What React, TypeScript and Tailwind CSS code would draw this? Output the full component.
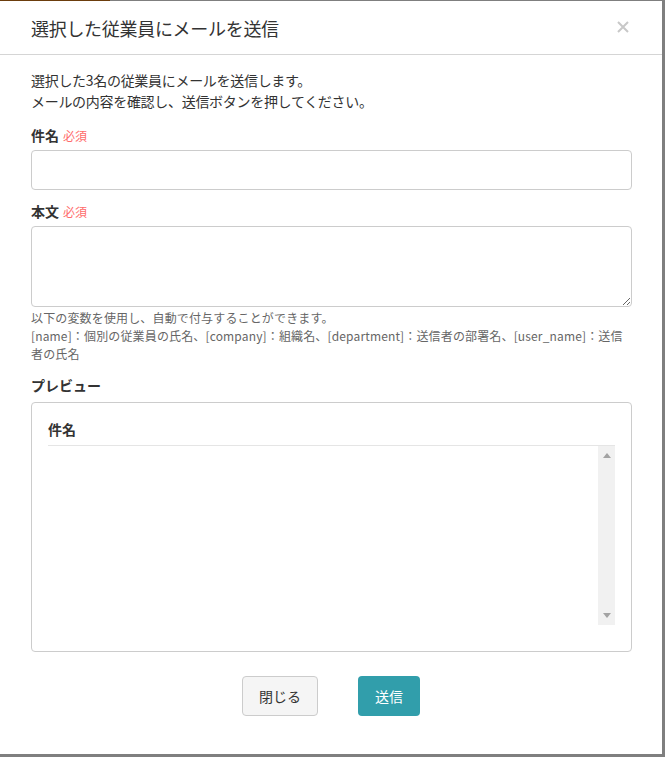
import React from 'react'

const font = { fontFamily: '"Noto Sans CJK JP", "Noto Sans", sans-serif' }

function Required() {
    return <span className="ml-1 text-[12px] font-normal text-[#ff6b6b]">必須</span>
}

export default function App() {
    return (
        <div className="h-[757px] w-[665px] overflow-hidden bg-[#7f7f7f]" style={font}>
            <div className="flex h-[1px]">
                <div className="w-[110px] bg-[#6b3d0c]" />
            </div>
            <div className="flex h-[753px] w-[662px] flex-col bg-white text-[#333]">
                {/* header */}
                <div className="flex h-[54px] items-center justify-between border-b border-[#d5d5d5] pl-[31px] pr-[33px]">
                    <h1 className="text-[18px] leading-[26px] tracking-[-0.3px]">選択した従業員にメールを送信</h1>
                    <svg width="12" height="12" viewBox="0 0 12 12" className="mt-[-2px]">
                        <path d="M1 1 L11 11 M11 1 L1 11" stroke="#c8c8c8" strokeWidth="2" />
                    </svg>
                </div>

                {/* body */}
                <div className="px-[31px] pt-[15px]">
                    <p className="text-[14px] leading-[21px] tracking-[-0.3px]">
                        選択した3名の従業員にメールを送信します。
                        <br />
                        メールの内容を確認し、送信ボタンを押してください。
                    </p>

                    <label className="mt-[13px] block text-[14px] font-bold leading-[21px]">
                        件名<Required />
                    </label>
                    <input className="mt-[4px] block h-[40px] w-[601px] rounded-[4px] border border-[#ccc] px-3 outline-none" />

                    <label className="mt-[11px] block text-[14px] font-bold leading-[21px]">
                        本文<Required />
                    </label>
                    <textarea className="mt-[4px] block h-[81px] w-[601px] rounded-[4px] border border-[#ccc] px-3 outline-none" />

                    <p className="mt-[2px] text-[12px] leading-[18px] tracking-[0.15px] text-[#666]">
                        以下の変数を使用し、自動で付与することができます。
                        <br />
                        [name]：個別の従業員の氏名、[company]：組織名、[department]：送信者の部署名、[user_name]：送信者の氏名
                    </p>

                    <h2 className="mt-[12px] text-[14px] font-bold leading-[21px]">プレビュー</h2>
                    <div className="mt-[6px] h-[250px] w-[601px] rounded-[4px] border border-[#ccc] px-4 pt-4">
                        <div className="border-b border-[#e5e5e5] pb-[5px] text-[14px] font-bold leading-[21px]">件名</div>
                        <div className="flex h-[179px] justify-end">
                            <div className="flex w-[17px] flex-col items-center justify-between bg-[#f1f1f1] py-[7px]">
                                <svg width="8" height="5" viewBox="0 0 8 5"><path d="M0 5 L4 0 L8 5 Z" fill="#a3a3a3" /></svg>
                                <svg width="8" height="5" viewBox="0 0 8 5"><path d="M0 0 L4 5 L8 0 Z" fill="#a3a3a3" /></svg>
                            </div>
                        </div>
                    </div>

                    {/* footer */}
                    <div className="mt-[24px] flex justify-center gap-[40px]">
                        <button className="h-[40px] w-[76px] rounded-[4px] border border-[#ccc] bg-[#f5f5f5] text-[14px] text-[#333]">
                            閉じる
                        </button>
                        <button className="h-[40px] w-[62px] rounded-[4px] bg-[#319eab] text-[14px] text-white">
                            送信
                        </button>
                    </div>
                </div>
            </div>
        </div>
    )
}
